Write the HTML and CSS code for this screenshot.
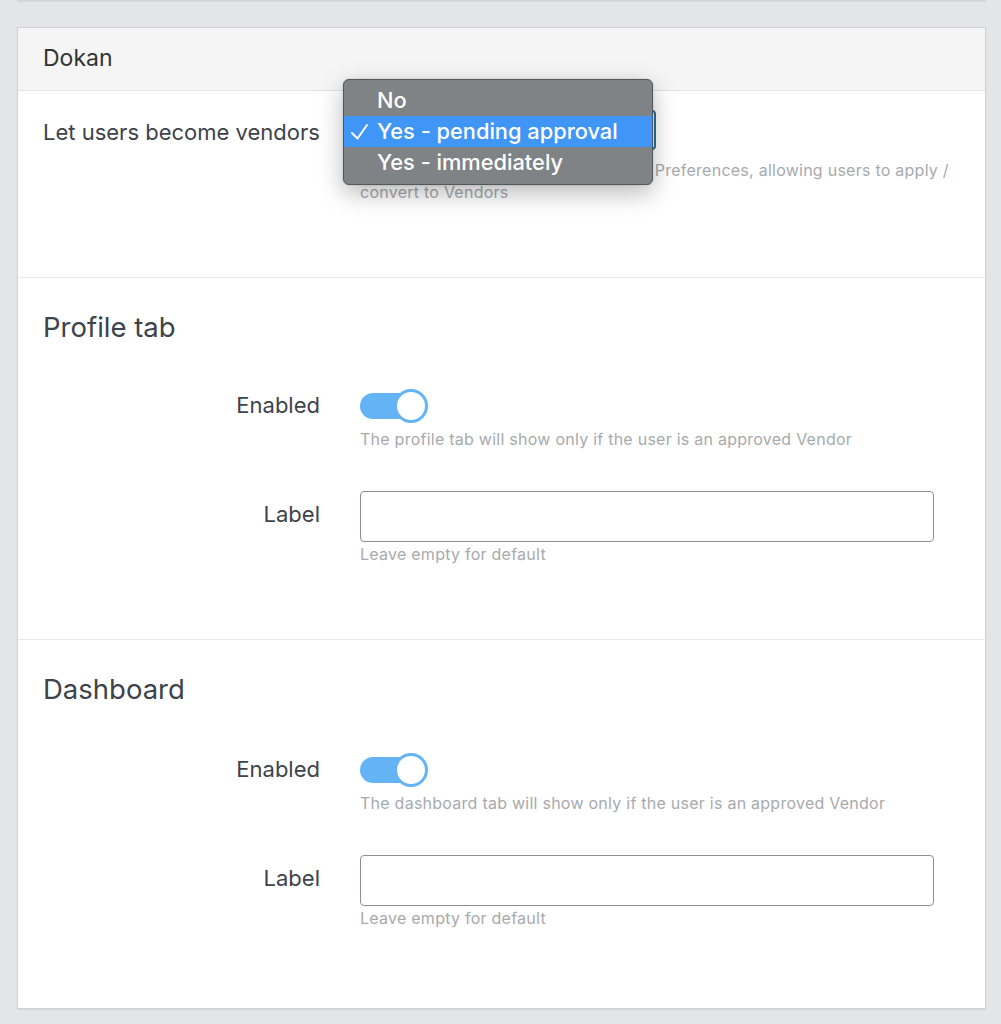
FILE: index.html
```html
<!DOCTYPE html>
<html>
<head>
<meta charset="utf-8">
<link rel="stylesheet" href="styles.css">
</head>
<body>
<div class="prev-card"></div>
<div class="card">
  <div class="card-header">Dokan</div>

  <div class="section section-first">
    <div class="field-row">
      <div class="field-label label-vendors">Let users become vendors</div>
      <div class="field-body">
        <div class="select-wrap">
          <div class="select-box"></div>
          <div class="dropdown">
            <div class="opt">No</div>
            <div class="opt opt-active">
              <svg class="check" width="20" height="20" viewBox="0 0 20 20"><polyline points="3,11 8.5,16.5 18,3" fill="none" stroke="#fff" stroke-width="2" stroke-linecap="round" stroke-linejoin="round"/></svg>
              Yes - pending approval
            </div>
            <div class="opt">Yes - immediately</div>
          </div>
        </div>
        <p class="desc">Enable the Vendor tab in the Account Preferences, allowing users to apply / convert to Vendors</p>
      </div>
    </div>
  </div>

  <div class="section">
    <h2 class="section-title">Profile tab</h2>
    <div class="field-row row-toggle">
      <div class="field-label label-toggle">Enabled</div>
      <div class="field-body">
        <div class="toggle"><span class="knob"></span></div>
        <p class="desc desc-toggle">The profile tab will show only if the user is an approved Vendor</p>
      </div>
    </div>
    <div class="field-row row-input">
      <div class="field-label label-input">Label</div>
      <div class="field-body">
        <div class="text-input"></div>
        <p class="desc desc-input">Leave empty for default</p>
      </div>
    </div>
  </div>

  <div class="section section-last">
    <h2 class="section-title">Dashboard</h2>
    <div class="field-row row-toggle row-toggle-2">
      <div class="field-label label-toggle">Enabled</div>
      <div class="field-body">
        <div class="toggle"><span class="knob"></span></div>
        <p class="desc desc-toggle">The dashboard tab will show only if the user is an approved Vendor</p>
      </div>
    </div>
    <div class="field-row row-input">
      <div class="field-label label-input">Label</div>
      <div class="field-body">
        <div class="text-input"></div>
        <p class="desc desc-input">Leave empty for default</p>
      </div>
    </div>
  </div>
</div>
</body>
</html>
```

FILE: styles.css
```css
* { box-sizing: border-box; }
html, body { margin: 0; padding: 0; }
body {
  background: #e4e5e8;
  font-family: Inter, "Open Sans", sans-serif;
  color: #3c434a;
  height: 1024px;
  overflow: hidden;
}
.prev-card {
  margin: 0 15px 0 17px;
  height: 2px;
  background: #d3d5d8;
}
.card {
  margin: 25px 15px 0 17px;
  background: #fff;
  border: 1px solid #cfd1d4;
  box-shadow: 0 1px 1px rgba(0,0,0,0.05);
}
.card-header {
  height: 63px;
  background: #f5f5f5;
  border-bottom: 1px solid #e3e3e3;
  padding: 0 25px;
  font-size: 23px;
  line-height: 60px;
  color: #333;
}
.section {
  padding: 32px 15px 74px 25px;
  border-bottom: 1px solid #e8e8e8;
}
.section-first { padding-top: 19px; }
.section-last { border-bottom: none; padding-bottom: 79px; }
.section-title {
  margin: 0;
  font-size: 27.5px;
  line-height: 34px;
  font-weight: 400;
  color: #3c434a;
}
.field-row {
  display: grid;
  grid-template-columns: 277px 610px;
  column-gap: 40px;
}
.field-label {
  font-size: 22px;
  line-height: 26px;
  text-align: right;
  color: #3c434a;
}
.label-vendors { text-align: left; padding-top: 9px; }
.label-toggle { padding-top: 3px; }
.label-input { padding-top: 10px; }
.field-body { min-width: 0; }
.desc {
  margin: 0;
  font-size: 16px;
  line-height: 22px;
  color: #a7aaad;
  letter-spacing: 0.25px;
}
.select-wrap { position: relative; }
.select-box {
  width: 296px;
  height: 40px;
  border: 2px solid #2271b1;
  border-radius: 4px;
  background: #fff;
}
.dropdown {
  position: absolute;
  left: -17px;
  top: -31px;
  width: 310px;
  height: 106px;
  background: #7f8386;
  border: 1px solid #55585b;
  border-radius: 6px;
  box-shadow: 0 8px 24px rgba(0,0,0,0.28), 0 0 2px rgba(0,0,0,0.2);
  padding-top: 5px;
}
.opt {
  position: relative;
  height: 31px;
  line-height: 31px;
  padding-left: 33px;
  font-size: 21.8px;
  font-weight: 500;
  color: #fff;
}
.opt-active { background: #3f96f7; }
.check { position: absolute; left: 5px; top: 6px; }
.select-wrap + .desc { margin-top: 9px; }
.row-toggle { margin-top: 45px; }
.row-toggle-2 { margin-top: 47px; }
.toggle {
  position: relative;
  width: 68px;
  height: 34px;
}
.toggle::before {
  content: "";
  position: absolute;
  left: 0;
  top: 4px;
  width: 62px;
  height: 26px;
  border-radius: 13px;
  background: #63b3f5;
}
.knob {
  position: absolute;
  left: 34px;
  top: 0;
  width: 34px;
  height: 34px;
  border-radius: 50%;
  background: #fff;
  border: 3px solid #63b3f5;
}
.desc-toggle { margin-top: 5px; }
.row-input { margin-top: 41px; }
.text-input {
  width: 574px;
  height: 51px;
  border: 1px solid #8c8f94;
  border-radius: 4px;
  background: #fff;
}
.desc-input { margin-top: 1px; }
```
